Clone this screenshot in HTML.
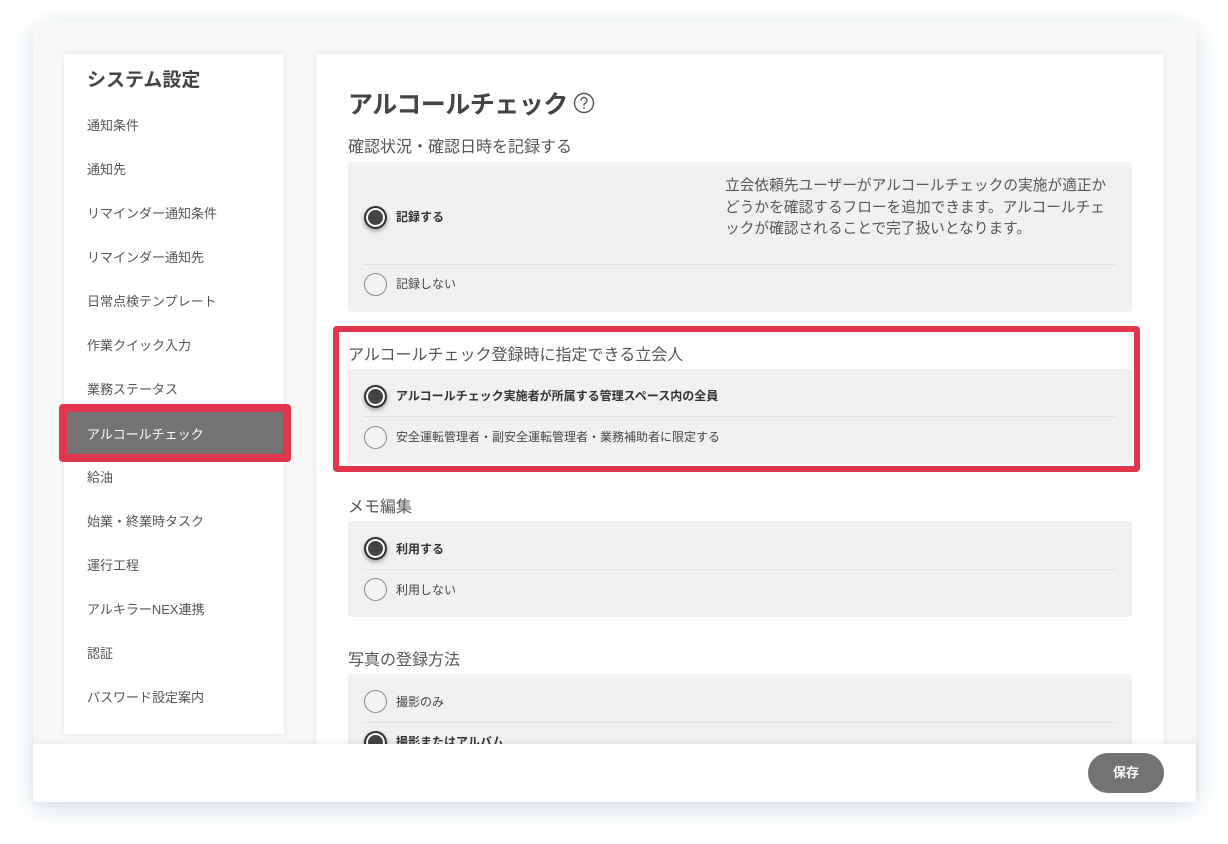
<!DOCTYPE html>
<html><head><meta charset="utf-8"><style>
*{box-sizing:border-box;margin:0;padding:0}
body{width:1228px;height:844px;background:#fff;position:relative;overflow:hidden;font-family:"Liberation Sans","Noto Sans CJK JP",sans-serif;color:#444}
.frame{position:absolute;left:33px;top:22px;width:1163px;height:780px;background:#f7f7f7;box-shadow:0 6px 24px rgba(120,160,180,.35);overflow:hidden}
.side{position:absolute;left:31px;top:32px;width:220px;height:680px;background:#fff;box-shadow:0 0 6px rgba(0,0,0,.08)}
.side h2{position:absolute;left:23px;top:11px;font-size:19px;font-weight:bold;color:#444}
.side .it{position:absolute;left:23px;font-size:13px;color:#555;line-height:16px}
.main{position:absolute;left:283px;top:32px;width:848px;height:760px;background:#fff;box-shadow:0 0 6px rgba(0,0,0,.08)}
.abs{position:absolute}
.t1{font-size:25px;font-weight:bold;color:#444;letter-spacing:-0.5px}
.lbl{font-size:16px;color:#555}
.box{position:absolute;left:348px;width:784px;background:#f1f1f1;border-radius:4px}
.sep{position:absolute;left:363px;width:753px;height:1px;background:#e2e2e2}
.r{position:absolute;width:23px;height:23px;border-radius:50%;border:1.5px solid #888;background:#f4f4f4}
.r.on{border:2px solid #333;background:#444;box-shadow:inset 0 0 0 2px #fff,0 2px 4px rgba(0,0,0,.35)}
.ot{position:absolute;font-size:12px;color:#444}
.ot.b{font-weight:bold;color:#333}
</style></head><body>
<div class="frame">
 <div class="side">
  <h2>システム設定</h2>
  <div class="it" style="top:64px">通知条件</div>
  <div class="it" style="top:108px">通知先</div>
  <div class="it" style="top:152px">リマインダー通知条件</div>
  <div class="it" style="top:196px">リマインダー通知先</div>
  <div class="it" style="top:240px">日常点検テンプレート</div>
  <div class="it" style="top:284px">作業クイック入力</div>
  <div class="it" style="top:328px">業務ステータス</div>
  <div class="it" style="top:416px">給油</div>
  <div class="it" style="top:460px">始業・終業時タスク</div>
  <div class="it" style="top:504px">運行工程</div>
  <div class="it" style="top:548px">アルキラーNEX連携</div>
  <div class="it" style="top:592px">認証</div>
  <div class="it" style="top:636px">パスワード設定案内</div>
 </div>
 <div class="main"></div>
</div>
<div class="abs" style="left:59px;top:404px;width:232px;height:58px;background:#e0354a;border-radius:4px"></div>
<div class="abs" style="left:67px;top:412px;width:216px;height:42px;background:#737373;color:#fff;font-size:13px;padding:12px 0 0 20px">アルコールチェック</div>

<div class="abs t1" style="left:348px;top:85px">アルコールチェック</div>
<svg class="abs" style="left:573px;top:92px" width="22" height="22" viewBox="0 0 22 22"><circle cx="11" cy="11" r="9.5" fill="none" stroke="#555" stroke-width="1.4"/><path d="M8 8.5a3 3 0 1 1 4 2.8c-.8.4-1 .9-1 1.8v.6" fill="none" stroke="#555" stroke-width="1.4"/><circle cx="11" cy="16" r="0.9" fill="#555"/></svg>

<div class="abs lbl" style="left:348px;top:133px">確認状況・確認日時を記録する</div>
<div class="box" style="top:162px;height:150px"></div>
<div class="sep" style="top:264px"></div>
<div class="r on" style="left:364px;top:206px"></div>
<div class="ot b" style="left:396px;top:208px">記録する</div>
<div class="abs" style="left:725px;top:176px;width:392px;font-size:14.7px;line-height:21.5px;color:#555">立会依頼先ユーザーがアルコールチェックの実施が適正かどうかを確認するフローを追加できます。アルコールチェックが確認されることで完了扱いとなります。</div>
<div class="r" style="left:364px;top:273px"></div>
<div class="ot" style="left:396px;top:275px">記録しない</div>

<div class="box" style="top:369px;height:95px"></div>
<div class="abs" style="left:333px;top:326px;width:807px;height:146px;border:6px solid #e0354a;border-radius:4px"></div>
<div class="abs lbl" style="left:348px;top:341px">アルコールチェック登録時に指定できる立会人</div>
<div class="sep" style="top:416px"></div>
<div class="r on" style="left:364px;top:385px"></div>
<div class="ot b" style="left:396px;top:387px">アルコールチェック実施者が所属する管理スペース内の全員</div>
<div class="r" style="left:364px;top:426px"></div>
<div class="ot" style="left:396px;top:428px">安全運転管理者・副安全運転管理者・業務補助者に限定する</div>

<div class="abs lbl" style="left:348px;top:493px">メモ編集</div>
<div class="box" style="top:521px;height:96px"></div>
<div class="sep" style="top:569px"></div>
<div class="r on" style="left:364px;top:537px"></div>
<div class="ot b" style="left:396px;top:540px">利用する</div>
<div class="r" style="left:364px;top:578px"></div>
<div class="ot" style="left:396px;top:581px">利用しない</div>

<div class="abs lbl" style="left:348px;top:646px">写真の登録方法</div>
<div class="box" style="top:674px;height:80px"></div>
<div class="sep" style="top:722px"></div>
<div class="r" style="left:364px;top:690px"></div>
<div class="ot" style="left:396px;top:693px">撮影のみ</div>
<div class="r on" style="left:364px;top:731px"></div>
<div class="ot b" style="left:396px;top:733px">撮影またはアルバム</div>

<div class="abs" style="left:33px;top:744px;width:1163px;height:58px;background:#fff;box-shadow:0 -2px 6px rgba(0,0,0,.06)"></div>
<div class="abs" style="left:1088px;top:753px;width:76px;height:40px;border-radius:20px;background:#737373;color:#fff;font-size:13px;font-weight:bold;text-align:center;line-height:40px">保存</div>
</body></html>
